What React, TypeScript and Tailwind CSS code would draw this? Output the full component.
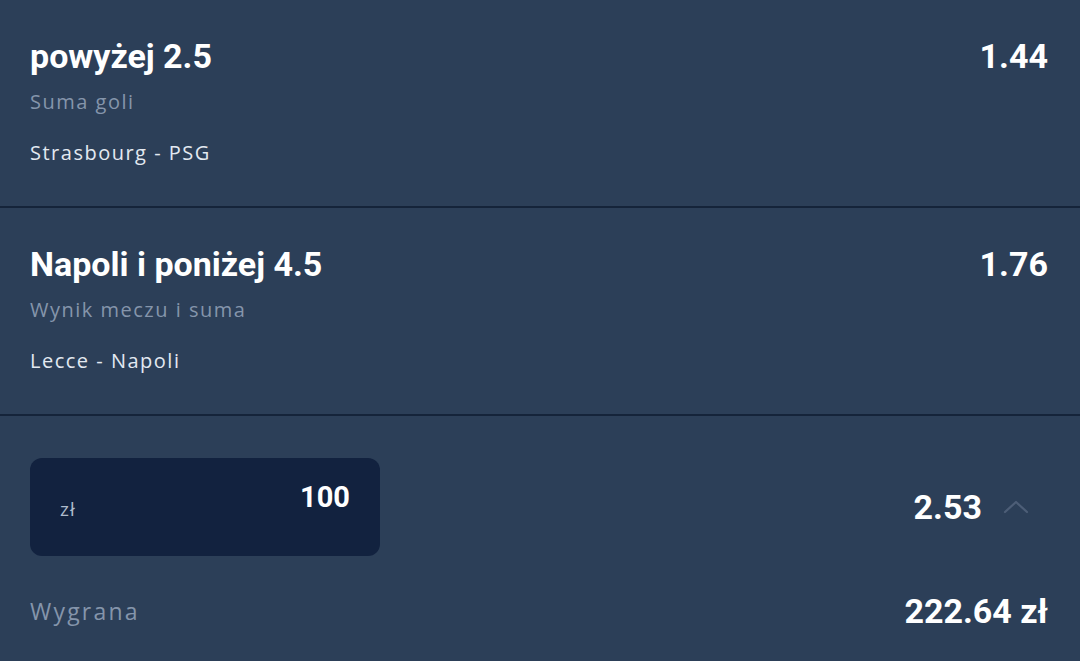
import React from 'react';

type Selection = {
  pick: string;
  market: string;
  match: string;
  odds: string;
};

const selections: Selection[] = [
  { pick: 'powyżej 2.5', market: 'Suma goli', match: 'Strasbourg - PSG', odds: '1.44' },
  { pick: 'Napoli i poniżej 4.5', market: 'Wynik meczu i suma', match: 'Lecce - Napoli', odds: '1.76' },
];

function SelectionRow({ s }: { s: Selection }) {
  return (
    <div className="flex h-[208px] items-start justify-between border-b-2 border-[#15243a] px-[30px] pt-[36px]">
      <div>
        <p className="font-['Roboto'] text-[34px] font-bold leading-[40px] text-white">{s.pick}</p>
        <p className="mt-[13px] font-['Open_Sans'] text-[20px] font-medium leading-[26px] tracking-[1.5px] text-[#8595ab]">{s.market}</p>
        <p className="mt-[25px] font-['Open_Sans'] text-[20px] font-medium leading-[26px] tracking-[1.5px] text-[#e3e9f1]">{s.match}</p>
      </div>
      <p className="pr-[2px] font-['Roboto'] text-[34px] font-bold leading-[40px] text-white">{s.odds}</p>
    </div>
  );
}

export default function App() {
  return (
    <div className="h-[661px] w-[1080px] overflow-hidden bg-[#2c3f58]">
      {selections.map((s) => (
        <SelectionRow key={s.pick} s={s} />
      ))}
      <div className="px-[30px] pt-[42px]">
        <div className="flex items-center justify-between">
          <div className="flex h-[98px] w-[350px] items-start justify-between rounded-[12px] bg-[#12223f] px-[30px] pt-[22px]">
            <span className="mt-[16px] font-['Open_Sans'] text-[19px] font-medium leading-[26px] tracking-[1px] text-[#aebbcc]">zł</span>
            <span className="font-['Roboto'] text-[29px] font-bold leading-[34px] text-white">100</span>
          </div>
          <div className="flex items-center gap-[21px] pr-[21px]">
            <span className="font-['Roboto'] text-[34px] font-bold leading-[40px] text-white">2.53</span>
            <svg width="26" height="14" viewBox="0 0 26 14" fill="none" stroke="#4d5e77" strokeWidth="2.2" strokeLinecap="round" strokeLinejoin="round">
              <path d="M2 12 L13 2 L24 12" />
            </svg>
          </div>
        </div>
        <div className="mt-[35px] flex items-center justify-between">
          <span className="font-['Open_Sans'] text-[23px] font-medium leading-[30px] tracking-[2.2px] text-[#8595ab]">Wygrana</span>
          <span className="pr-[2px] font-['Roboto'] text-[34px] font-bold leading-[40px] text-white">222.64 zł</span>
        </div>
      </div>
    </div>
  );
}
